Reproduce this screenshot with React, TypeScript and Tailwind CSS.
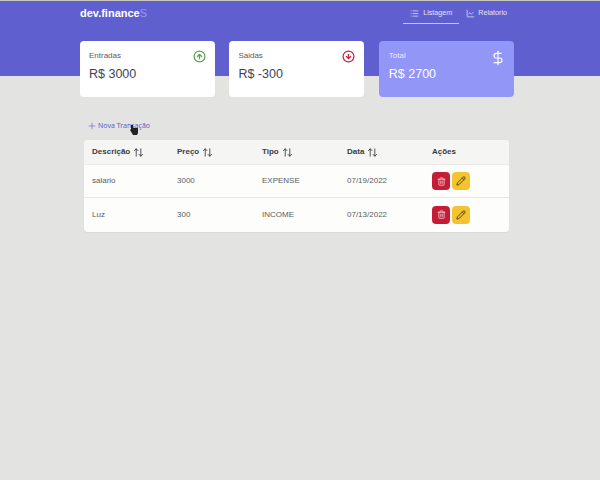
import {
  ArrowDownCircle,
  ArrowUpCircle,
  ArrowUpDown,
  ChartLine,
  DollarSign,
  List,
  Pencil,
  Plus,
  Trash2,
} from "lucide-react";

const cards = [
  { title: "Entradas", value: "R$ 3000", icon: ArrowUpCircle, iconColor: "text-[#5d9e52]", total: false },
  { title: "Saidas", value: "R$ -300", icon: ArrowDownCircle, iconColor: "text-[#c21f38]", total: false },
  { title: "Total", value: "R$ 2700", icon: DollarSign, iconColor: "text-white", total: true },
];

const rows = [
  { id: 1, description: "salario", price: "3000", type: "EXPENSE", date: "07/19/2022" },
  { id: 2, description: "Luz", price: "300", type: "INCOME", date: "07/13/2022" },
];

const columns = ["Descrição", "Preço", "Tipo", "Data"];

export default function App() {
  return (
    <div className="relative h-[480px] w-[600px] overflow-hidden bg-[#e3e3e1] font-['Liberation_Sans',sans-serif]">
      <header className="h-[76px] border-t border-[#c9c8c0] bg-[#5f5fcf]">
        <div className="flex items-start justify-between pl-20 pr-[93px]">
          <span className="pt-[5px] text-[11px] font-bold leading-[14px] text-white">
            dev.finance<span className="font-normal text-[#9a9af0]">S</span>
          </span>
          <nav className="flex text-[7.2px] text-[#e4e4f8]">
            <a className="flex h-[23px] w-[56px] items-center justify-center gap-1 border-b border-[#c5c5f0] pt-0.5">
              <List size={9} />
              Listagem
            </a>
            <a className="ml-[7px] flex h-[23px] items-center gap-[3px] pt-0.5">
              <ChartLine size={9} />
              Relatorio
            </a>
          </nav>
        </div>
      </header>

      <main className="-mt-[35px] pl-20">
        <div className="flex gap-[14.4px]">
          {cards.map((card) => (
            <div
              key={card.title}
              className={`flex h-14 w-[135px] items-start justify-between rounded-sm pt-[9px] ${
                card.total ? "bg-[#9196f7] pl-2.5 pr-2 text-white" : "bg-white pl-[9px] pr-[9px] text-[#3d4359]"
              }`}
            >
              <div>
                <p className={`text-[8px] leading-3 ${card.total ? "text-[#e8e9ff]" : "text-[#5a5a66]"}`}>
                  {card.title}
                </p>
                <p className="mt-[3px] text-[12.5px] leading-[18px]">{card.value}</p>
              </div>
              <card.icon
                size={card.total ? 16 : 13}
                strokeWidth={card.total ? 1.75 : 2.25}
                className={card.iconColor}
              />
            </div>
          ))}
        </div>

        <div className="ml-[7px] mt-6 flex h-[10px] items-center gap-[1px] text-[7px] text-[#5f5fcf]">
          <Plus size={10} strokeWidth={1.5} />
          <span className="font-['Noto_Sans',sans-serif]">Nova Transação</span>
        </div>

        <div className="ml-1 mt-[9px] w-[425px] overflow-hidden rounded-sm bg-[#fdfdfb] pb-px text-[8px] text-[#5c5c60] shadow-[0_1px_1px_rgba(0,0,0,0.04)]">
          <div className="grid h-[25px] grid-cols-5 items-center border-b border-[#ecebe8] bg-[#f5f5f4] font-bold text-[#3c3c42]">
            {columns.map((column) => (
              <div key={column} className="flex items-center gap-[3px] px-2">
                {column}
                <ArrowUpDown size={11} strokeWidth={1.75} className="text-[#2c2c32]" />
              </div>
            ))}
            <div className="px-2">Ações</div>
          </div>
          {rows.map((row) => (
            <div key={row.id} className="grid h-[33px] grid-cols-5 items-center border-b border-[#e8e7e4] last:border-b-0">
              <div className="px-2">{row.description}</div>
              <div className="px-2">{row.price}</div>
              <div className="px-2">{row.type}</div>
              <div className="px-2">{row.date}</div>
              <div className="flex gap-[2px] px-2">
                <button className="flex h-[18px] w-[18px] items-center justify-center rounded-sm bg-[#c41e36] text-[#fbdcdc]">
                  <Trash2 size={9} />
                </button>
                <button className="flex h-[18px] w-[18px] items-center justify-center rounded-sm bg-[#f4c430] text-[#3a3218]">
                  <Pencil size={10} />
                </button>
              </div>
            </div>
          ))}
        </div>
      </main>

      {/* hand cursor caught in the screenshot */}
      <svg className="absolute left-[130px] top-[125px]" width="9" height="10" viewBox="0 0 9 10">
        <path d="M1 0h2v3h5v5l-1 2H3L0 5l1-1z" fill="#222" />
      </svg>
    </div>
  );
}
